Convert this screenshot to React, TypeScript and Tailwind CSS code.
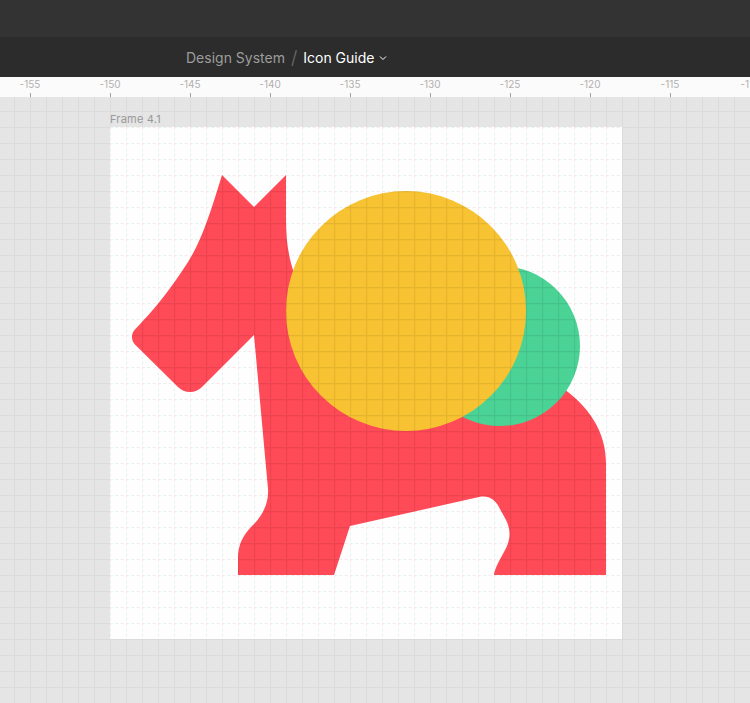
const dog =
  "M112 48 L144 80 L176 48 L176 92 C176 112 178 128 184 146 L300 240 L448 258 C479 278 496 305 496 336 L496 448 L384 448 C385 441 389 434 394 425 C401 413 401 403 396 393 L390 382 C386 373 379 368 369 370 L240 399 L224 448 L128 448 L128 431 C128 418 133 408 142 399 C152 390 159 376 158 362 L144 208 L92 260 A17 17 0 0 1 68 260 L25.2 217.8 A11 11 0 0 1 25.2 202.2 C45 182 62 160 78 135 C92 113 101 84 112 48 Z";

function Frame() {
  return (
    <svg viewBox="0 0 512 512" className="block h-[512px] w-[512px] bg-[#fefefe]">
      <defs>
        <pattern id="dashes" width="16" height="16" patternUnits="userSpaceOnUse">
          <path d="M0.5 5.33V8.33M0.5 10.67V13.67M0 0.5H3M5.33 0.5H8.33" stroke="#e6f2ef" />
          <path d="M0.5 0V3M10.67 0.5H13.67" stroke="#fde6ea" />
        </pattern>
        <pattern id="solid" width="16" height="16" patternUnits="userSpaceOnUse">
          <path d="M0.5 0V16M0 0.5H16" stroke="#000000" strokeOpacity="0.08" strokeWidth="1.3" />
        </pattern>
        <clipPath id="art">
          <path d={dog} />
          <circle cx="390" cy="219" r="80" />
          <circle cx="296" cy="184" r="120" />
        </clipPath>
      </defs>
      <rect width="512" height="512" fill="url(#dashes)" />
      <path d={dog} fill="#ff4a57" />
      <circle cx="390" cy="219" r="80" fill="#4bd395" />
      <circle cx="296" cy="184" r="120" fill="#f8c332" />
      <rect width="512" height="512" fill="url(#solid)" clipPath="url(#art)" />
    </svg>
  );
}

export default function App() {
  const marks = [-155, -150, -145, -140, -135, -130, -125, -120, -115, -110];
  return (
    <div className="h-[703px] w-[750px] overflow-hidden bg-[#e5e5e5] font-['Inter',sans-serif]">
      <div className="h-[37px] bg-[#333333]" />
      <div className="flex h-[40px] items-center bg-[#2c2c2c] pl-[186px] text-[14px]">
        <span className="text-[#9c9c9c]">Design System</span>
        <span className="ml-[6px] text-[18px] font-light text-[#6f6f6f]">/</span>
        <span className="ml-[6px] text-white">Icon Guide</span>
        <svg viewBox="0 0 8 6" className="ml-[5px] mt-[1px] h-[6px] w-[8px]" fill="none">
          <path d="M1 1.5L4 4.5L7 1.5" stroke="#ffffff" strokeWidth="1" />
        </svg>
      </div>
      <div className="-ml-[10px] flex h-[20px] w-[800px] bg-[#fcfbfb]">
        {marks.map((m) => (
          <div key={m} className="flex w-[80px] flex-col items-center justify-end">
            <span className="text-[10px] leading-[12px] text-[#b0b0b0]">{m}</span>
            <span className="mt-[3px] h-[4px] w-px bg-[#a0a0a0]" />
          </div>
        ))}
      </div>
      <div className="h-[606px] bg-[linear-gradient(to_right,#dbdbdb_1px,transparent_1px),linear-gradient(to_bottom,#dbdbdb_1px,transparent_1px)] bg-[length:16px_16px] bg-[position:14px_14px] pl-[110px] pt-[14px]">
        <p className="h-[16px] text-[11px] leading-[16px] tracking-[0.2px] text-[#999999]">Frame 4.1</p>
        <Frame />
      </div>
    </div>
  );
}
